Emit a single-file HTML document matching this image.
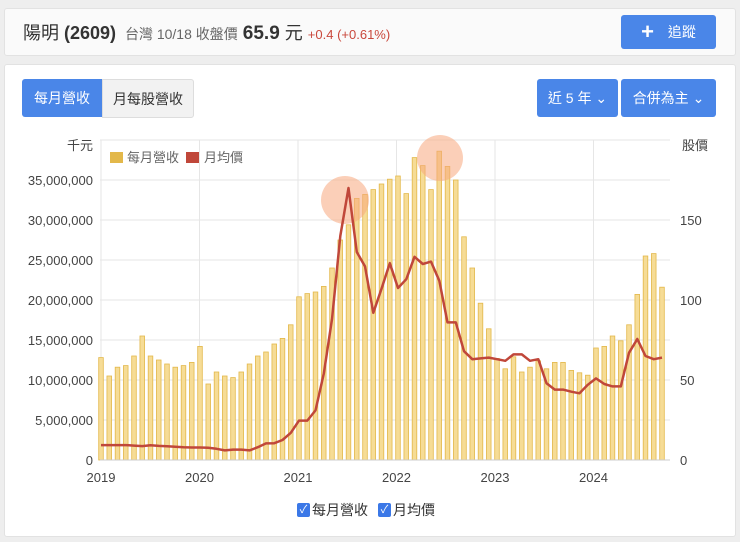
<!DOCTYPE html>
<html><head><meta charset="utf-8">
<style>
body{margin:0;width:740px;height:542px;background:#eeeeee;font-family:"Liberation Sans","Noto Sans CJK TC",sans-serif;position:relative;overflow:hidden}
.card{position:absolute;left:4px;width:732px;background:#fff;border:1px solid #e2e2e2;border-radius:3px;box-sizing:border-box}
.btn{position:absolute;background:#4a86e8;color:#fff;border-radius:3px;font-size:14px;display:flex;align-items:center;justify-content:center}
</style></head><body>
<div class="card" style="top:8px;height:48px;background:#fafafa"></div>
<div style="position:absolute;left:23px;top:19px;font-size:18px;color:#333;white-space:nowrap"><b style="font-weight:normal">陽明</b> <b>(2609)</b> <span style="font-size:14px;color:#666">&nbsp;台灣 10/18 收盤價</span> <b style="font-size:19px">65.9</b> <span style="font-size:18px">元</span> <span style="font-size:13px;color:#c9483c">+0.4 (+0.61%)</span></div>
<div class="btn" style="left:621px;top:15px;width:95px;height:34px"><span style="font-size:22px;font-weight:bold;margin-right:14px">+</span>追蹤</div>
<div class="card" style="top:64px;height:473px"></div>
<div class="btn" style="left:22px;top:79px;width:80px;height:38px;border-radius:3px 0 0 3px">每月營收</div>
<div class="btn" style="left:102px;top:79px;width:90px;height:37px;background:#f2f2f2;color:#333;border:1px solid #ddd;border-radius:0 3px 3px 0">月每股營收</div>
<div class="btn" style="left:537px;top:79px;width:81px;height:38px">近 5 年 ⌄</div>
<div class="btn" style="left:621px;top:79px;width:95px;height:38px">合併為主 ⌄</div>
<svg id="c" width="740" height="542" style="position:absolute;left:0;top:0" font-family="Liberation Sans,Noto Sans CJK TC,sans-serif"></svg>
<div style="position:absolute;left:297px;top:500px;font-size:14px;color:#333;display:flex;align-items:center">
<span style="display:inline-block;width:13px;height:14px;background:#3b78e7;border-radius:2px;color:#fff;font-size:11px;text-align:center;line-height:14px;margin-right:2px">✓</span>每月營收
<span style="display:inline-block;width:13px;height:14px;background:#3b78e7;border-radius:2px;color:#fff;font-size:11px;text-align:center;line-height:14px;margin:0 2px 0 10px">✓</span>月均價</div>
<script>
var s='';var SP=8.25;
var rev=[12.8,10.5,11.6,11.8,13,15.5,13,12.5,12,11.6,11.8,12.2,14.2,9.5,11,10.5,10.3,11,12,13,13.5,14.5,15.2,16.9,20.4,20.8,21,21.7,24,27.5,29.4,32.7,33.2,33.8,34.5,35.1,35.5,33.3,37.8,36.8,33.8,38.6,36.7,35,27.9,24,19.6,16.4,12.7,11.4,12.9,11,11.6,12.4,11.4,12.2,12.2,11.2,10.9,10.6,14,14.2,15.5,14.9,16.9,20.7,25.5,25.8,21.6];
var pr=[9.3,9.3,9.3,9.3,9,8.7,9.2,8.8,8.6,8.3,8,7.8,7.8,7.6,7,6,6.5,6.5,6,8,10.4,10.5,12.5,17,24.6,24.6,31,54,88,140,170,130,121,92,107,123,107.5,113,127,122.5,124,112,86,86,68,63,63.5,64,63,62,66,66,62,63,48,44,44,42.7,41.7,47,51,47.5,46,46,67,75.6,65,63,64];
for(var i=0;i<=8;i++){var y=460-i*40;s+='<line x1="100" x2="670" y1="'+y+'" y2="'+y+'" stroke="#e6e6e6"/>';
s+='<text x="93" y="'+(y+5)+'" text-anchor="end" font-size="13" fill="#444">'+(i==8?'':(i*5000000).toLocaleString('en-US'))+'</text>';}
var ly=[0,50,100,150];ly.forEach(function(v){s+='<text x="680" y="'+(465-v*1.6)+'" font-size="13" fill="#444">'+v+'</text>'});
var yr=['2019','2020','2021','2022','2023','2024'];
for(var k=0;k<6;k++){var x=101+k*98.5;s+='<line x1="'+x+'" x2="'+x+'" y1="140" y2="460" stroke="#e6e6e6"/><text x="'+x+'" y="482" text-anchor="middle" font-size="13" fill="#444">'+yr[k]+'</text>';}
s+='<text x="93" y="150" text-anchor="end" font-size="13" fill="#444">千元</text><text x="682" y="150" font-size="13" fill="#444">股價</text>';
rev.forEach(function(v,i){var x=101+i*SP;s+='<rect x="'+(x-2.3)+'" y="'+(460-v*8)+'" width="4.6" height="'+(v*8)+'" fill="#f6dc96" stroke="#e3b84a" stroke-width="0.8"/>'});
s+='<circle cx="345" cy="200" r="24" fill="#f8a77d" opacity="0.55"/><circle cx="440" cy="158" r="23" fill="#f8a77d" opacity="0.55"/>';
var p='';pr.forEach(function(v,i){p+=(i?'L':'M')+(101+i*SP).toFixed(1)+' '+(460-v*1.6).toFixed(1)});
s+='<path d="'+p+'" fill="none" stroke="#c0473a" stroke-width="2.5" stroke-linejoin="round"/>';
s+='<line x1="100" x2="670" y1="460" y2="460" stroke="#ccc"/>';
s+='<rect x="110" y="152" width="13" height="11" fill="#e3b84a"/><text x="127" y="162" font-size="13" fill="#666">每月營收</text><rect x="186" y="152" width="13" height="11" fill="#c0473a"/><text x="204" y="162" font-size="13" fill="#666">月均價</text>';
document.getElementById('c').innerHTML=s;
</script>
</body></html>
